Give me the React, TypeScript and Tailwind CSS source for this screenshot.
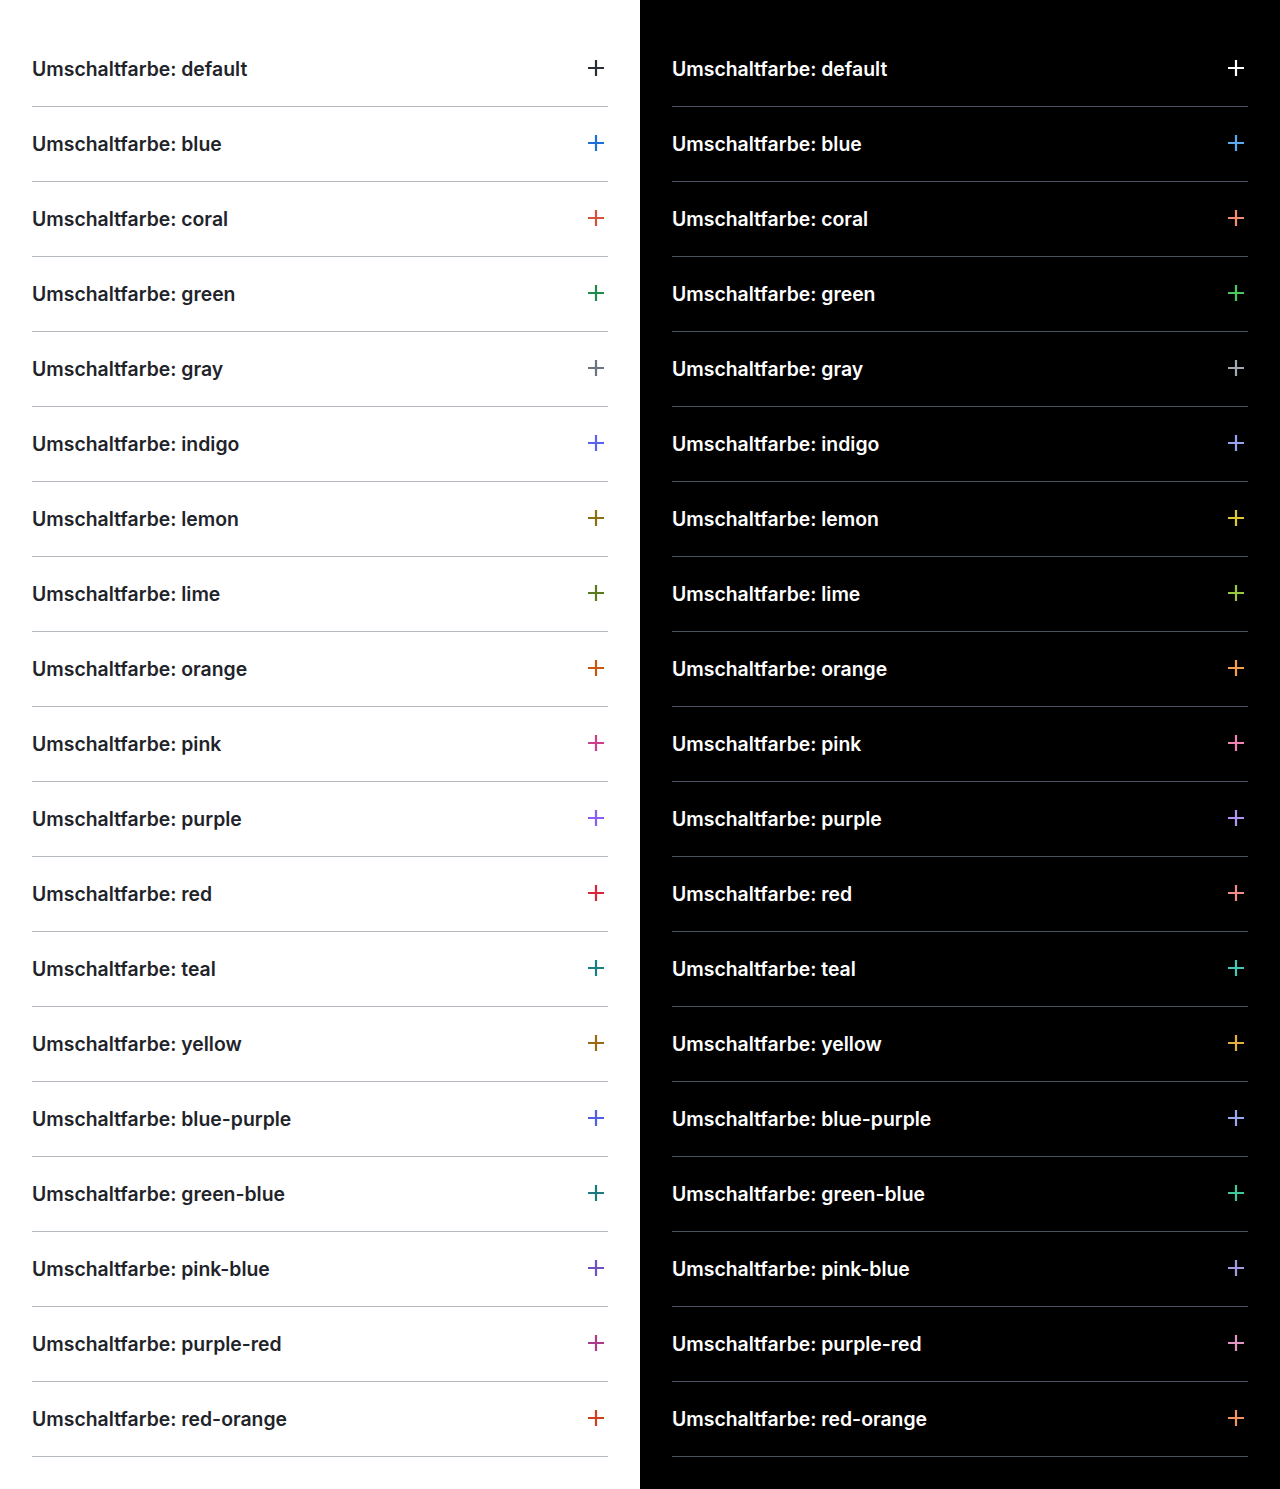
import React from 'react';

type Tone = { name: string; light: string; dark: string };

const TONES: Tone[] = [
  { name: 'default', light: 'text-[#2a2e35]', dark: 'text-[#ffffff]' },
  { name: 'blue', light: 'text-[#1a6fd8]', dark: 'text-[#5aa8f0]' },
  { name: 'coral', light: 'text-[#d4533b]', dark: 'text-[#f28c72]' },
  { name: 'green', light: 'text-[#1f8a4c]', dark: 'text-[#4cc860]' },
  { name: 'gray', light: 'text-[#6b7280]', dark: 'text-[#a3a9b0]' },
  { name: 'indigo', light: 'text-[#5864f0]', dark: 'text-[#98a2f2]' },
  { name: 'lemon', light: 'text-[#8a7010]', dark: 'text-[#e0c830]' },
  { name: 'lime', light: 'text-[#5a7a1f]', dark: 'text-[#98c840]' },
  { name: 'orange', light: 'text-[#c9560f]', dark: 'text-[#f2a050]' },
  { name: 'pink', light: 'text-[#cc3d8a]', dark: 'text-[#f282b2]' },
  { name: 'purple', light: 'text-[#8b5cf6]', dark: 'text-[#b494f2]' },
  { name: 'red', light: 'text-[#d9253a]', dark: 'text-[#f28a86]' },
  { name: 'teal', light: 'text-[#1a7f7f]', dark: 'text-[#40c8b8]' },
  { name: 'yellow', light: 'text-[#9a6a10]', dark: 'text-[#e2b040]' },
  { name: 'blue-purple', light: 'text-[#5060e0]', dark: 'text-[#9aa8f2]' },
  { name: 'green-blue', light: 'text-[#1a7a80]', dark: 'text-[#40c89a]' },
  { name: 'pink-blue', light: 'text-[#7050c0]', dark: 'text-[#a49ae2]' },
  { name: 'purple-red', light: 'text-[#b03a8a]', dark: 'text-[#e294c2]' },
  { name: 'red-orange', light: 'text-[#d04020]', dark: 'text-[#f29462]' },
];

const Plus: React.FC<{ className: string }> = ({ className }) => (
  <svg width="16" height="16" viewBox="0 0 16 16" className={className} fill="none">
    <path d="M8 0v16M0 8h16" stroke="currentColor" strokeWidth="2.2" />
  </svg>
);

const Column: React.FC<{ dark?: boolean }> = ({ dark }) => (
  <div className={`w-[640px] px-8 py-8 ${dark ? 'bg-black' : 'bg-white'}`}>
    {TONES.map(t => (
      <div
        key={t.name}
        className={`flex h-[75px] items-center justify-between border-b pr-1 ${dark ? 'border-[#4b5260]' : 'border-[#b4b9c0]'}`}
      >
        <span className={`pt-[2px] text-[19.4px] font-semibold ${dark ? 'text-white' : 'text-[#1f242b]'}`}>
          Umschaltfarbe: {t.name}
        </span>
        <span className="mb-[3px] flex">
          <Plus className={dark ? t.dark : t.light} />
        </span>
      </div>
    ))}
  </div>
);

export default function App() {
  return (
    <div className="flex w-[1280px]" style={{ fontFamily: 'Inter, "Noto Sans", sans-serif' }}>
      <Column />
      <Column dark />
    </div>
  );
}
